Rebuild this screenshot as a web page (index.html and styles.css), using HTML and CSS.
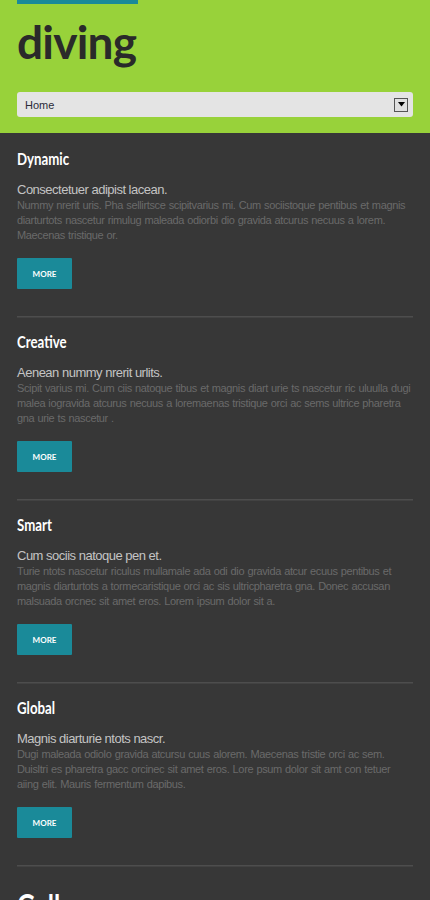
FILE: index.html
```html
<!DOCTYPE html>
<html>
<head>
<meta charset="utf-8">
<link rel="stylesheet" href="styles.css">
</head>
<body>
<header class="header">
  <div class="topbar"></div>
  <h1 class="logo">diving</h1>
  <div class="select">
    <span class="select-label">Home</span>
    <span class="select-arrow"><svg width="7" height="5" viewBox="0 0 7 5"><path d="M0 0H7L3.5 4.5Z" fill="#000"/></svg></span>
  </div>
</header>
<main class="content">
  <section class="block">
    <h2 class="block-title">Dynamic</h2>
    <p class="block-lead">Consectetuer adipist lacean.</p>
    <p class="block-text">Nummy nrerit uris. Pha sellirtsce scipitvarius mi. Cum sociistoque pentibus et magnis diarturtots nascetur rimulug maleada odiorbi dio gravida atcurus necuus a lorem. Maecenas tristique or.</p>
    <a class="btn">MORE</a>
  </section>
  <section class="block">
    <h2 class="block-title">Creative</h2>
    <p class="block-lead">Aenean nummy nrerit urlits.</p>
    <p class="block-text">Scipit varius mi. Cum ciis natoque tibus et magnis diart urie ts nascetur ric uluulla dugi malea iogravida atcurus necuus a loremaenas tristique orci ac sems ultrice pharetra gna urie ts nascetur .</p>
    <a class="btn">MORE</a>
  </section>
  <section class="block">
    <h2 class="block-title">Smart</h2>
    <p class="block-lead">Cum sociis natoque pen et.</p>
    <p class="block-text">Turie ntots nascetur riculus mullamale ada odi dio gravida atcur ecuus pentibus et magnis diarturtots a tormecaristique orci ac sis ultricpharetra gna. Donec accusan malsuada orcnec sit amet eros. Lorem ipsum dolor sit a.</p>
    <a class="btn">MORE</a>
  </section>
  <section class="block">
    <h2 class="block-title">Global</h2>
    <p class="block-lead">Magnis diarturie ntots nascr.</p>
    <p class="block-text">Dugi maleada odiolo gravida atcursu cuus alorem. Maecenas tristie orci ac sem. Duisltri es pharetra gacc orcinec sit amet eros. Lore psum dolor sit amt con tetuer aiing elit. Mauris fermentum dapibus.</p>
    <a class="btn">MORE</a>
  </section>
  <section class="gallery">
    <h2 class="gallery-title">Gallery</h2>
  </section>
</main>
</body>
</html>
```
FILE: styles.css
```css
* { box-sizing: border-box; }
html, body { margin: 0; padding: 0; }
body {
  background: #373737;
  font-family: "Liberation Sans", Arial, sans-serif;
}
.header {
  background: #98d23a;
  padding: 0 17px 16px;
}
.topbar {
  width: 121px;
  height: 4px;
  background: #1a8a99;
}
.logo {
  margin: 0;
  font-family: Lato, "Noto Sans", sans-serif;
  font-weight: 700;
  font-size: 46px;
  line-height: 76px;
  height: 88px;
  color: #2a2a2a;
  letter-spacing: -0.8px;
}
.select {
  display: flex;
  align-items: center;
  justify-content: space-between;
  height: 25px;
  background: #e4e4e4;
  border-radius: 3px;
  padding: 0 5px 0 8px;
}
.select-label {
  font-size: 11px;
  color: #2b2b3a;
}
.select-arrow {
  width: 14px;
  height: 14px;
  border: 1px solid #555;
  background: #e0e0e0;
  display: flex;
  align-items: center;
  justify-content: center;
}
.content {
  padding: 0 17px;
}
.block {
  padding: 16px 0 27px;
  border-bottom: 1px solid #4d4d4d;
  box-shadow: 0 1px 0 #424242;
}
.block + .block { padding-top: 15px; }
.block-title {
  margin: 0;
  font-family: Lato, "Noto Sans", sans-serif;
  font-weight: 700;
  font-size: 17px;
  line-height: 20px;
  color: #ffffff;
  transform: scaleX(0.78);
  transform-origin: left center;
}
.block-lead {
  margin: 13px 0 0;
  font-size: 13px;
  line-height: 16px;
  color: #c4c4c4;
  letter-spacing: -0.5px;
}
.block-text {
  margin: 0;
  font-size: 11px;
  line-height: 15px;
  color: #6a6a6a;
  letter-spacing: -0.36px;
  word-spacing: 0.5px;
}
.btn {
  display: flex;
  align-items: center;
  justify-content: center;
  width: 55px;
  height: 31px;
  margin-top: 15px;
  background: #1a8a99;
  color: #fff;
  font-family: Lato, "Noto Sans", sans-serif;
  font-weight: 700;
  font-size: 8px;
  border-radius: 1px;
}
.gallery { padding-top: 22px; }
.gallery-title {
  margin: 0;
  font-family: Lato, "Noto Sans", sans-serif;
  font-weight: 700;
  font-size: 32px;
  line-height: 36px;
  color: #fff;
  transform: scaleX(0.78);
  transform-origin: left center;
}
```
